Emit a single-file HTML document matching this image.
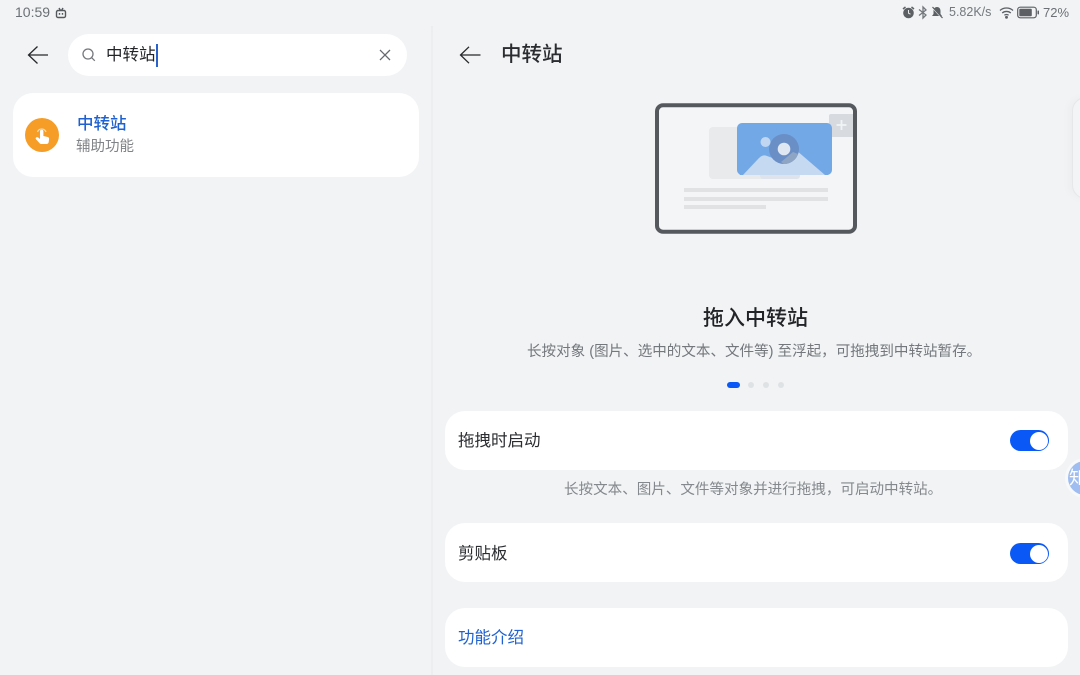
<!DOCTYPE html>
<html lang="zh-CN">
<head>
<meta charset="utf-8">
<title>中转站</title>
<style>
html,body{margin:0;padding:0}
body{width:1080px;height:675px;overflow:hidden;background:#f1f3f5;position:relative;font-family:"Liberation Sans","Noto Sans CJK SC",sans-serif;color:#26282b}
.a{position:absolute;white-space:nowrap;line-height:1}
.card{position:absolute;background:#fff;border-radius:20px}
svg{position:absolute;overflow:visible}
.sw{position:absolute;left:1010px;width:39px;height:21px;border-radius:11px;background:#0a59f7}
.sw i{position:absolute;right:1.500px;top:1.500px;width:18px;height:18px;border-radius:50%;background:#fff}
</style>
</head>
<body>
<!-- divider -->
<div style="position:absolute;left:431px;top:26px;width:2px;height:649px;background:#eceef0"></div>

<!-- status bar -->
<div class="a" style="left:15px;top:5px;font-size:14px;color:#6c7074">10:59</div>
<svg style="left:55px;top:7px" width="12" height="12" viewBox="0 0 12 12" fill="none" stroke="#55595d" stroke-width="1.400"><rect x="1.500" y="3.500" width="9" height="7" rx="1.500"/><path d="M4 1l1.500 2.500M8 1L6.500 3.500M4.500 6v1.800M7.500 6v1.800"/></svg>
<svg style="left:902px;top:6px" width="13" height="13" viewBox="0 0 13 13"><circle cx="6.500" cy="7" r="5.300" fill="#5c6064"/><path d="M1 3l2.500-2M12 3L9.500 1" stroke="#5c6064" stroke-width="1.500"/><path d="M6.500 4v3.200l2 1" stroke="#e8eaec" fill="none"/></svg>
<svg style="left:917px;top:6px" width="12" height="13" viewBox="0 0 12 13" fill="none" stroke="#74787c" stroke-width="1.300"><path d="M2 3.500l7 5.500-3 3V1l3 3-7 5.500"/></svg>
<svg style="left:931px;top:6px" width="12" height="13" viewBox="0 0 12 13"><path d="M6 1c2.500 0 3.500 2 3.500 4v3l1.500 2H1l1.500-2V5C2.500 3 3.500 1 6 1z" fill="#5c6064"/><path d="M1 1l10 11" stroke="#f1f3f5" stroke-width="1.500"/><path d="M1.500 1l10 11" stroke="#5c6064" stroke-width="1.200"/></svg>
<div class="a" style="left:949px;top:6px;font-size:12.500px;color:#74787c">5.82K/s</div>
<svg style="left:999px;top:6px" width="16" height="13" viewBox="0 0 16 13" fill="none" stroke="#5c6064" stroke-width="1.300"><path d="M1 4.500c3.500-3.300 9.500-3.300 13 0M3.200 7c2.300-2.100 6.300-2.100 8.600 0M5.400 9.300c1.200-1 3-1 4.200 0"/><circle cx="7.500" cy="11.300" r=".8" fill="#5c6064"/></svg>
<svg style="left:1017px;top:6px" width="23" height="13" viewBox="0 0 23 13"><rect x=".7" y="1.200" width="18.600" height="10.600" rx="2.500" fill="none" stroke="#5c6064" stroke-width="1.200"/><rect x="2.300" y="2.800" width="12.500" height="7.400" rx="1" fill="#5c6064"/><rect x="20.500" y="4.500" width="1.500" height="4" rx=".7" fill="#5c6064"/></svg>
<div class="a" style="left:1043px;top:6px;font-size:13px;color:#6c7074">72%</div>

<!-- left panel search -->
<svg style="left:27px;top:45px" width="22" height="20" viewBox="0 0 22 20" fill="none" stroke="#26282b" stroke-width="1.300"><path d="M21 10H1.500M10.500 1.500L1.500 10l9 8.500"/></svg>
<div style="position:absolute;left:68px;top:34px;width:339px;height:42px;border-radius:21px;background:#fff"></div>
<svg style="left:81px;top:47px" width="16" height="16" viewBox="0 0 16 16" fill="none" stroke="#74787c" stroke-width="1.300"><circle cx="7" cy="7" r="5"/><path d="M10.800 10.800l3 3"/></svg>
<div class="a" style="left:106px;top:47px;font-size:16.500px;color:#222427">中转站</div>
<div style="position:absolute;left:156px;top:44px;width:2px;height:23px;background:#2a62c9"></div>
<svg style="left:379px;top:49px" width="12" height="12" viewBox="0 0 12 12" fill="none" stroke="#666a6e" stroke-width="1.300"><path d="M1 1l10 10M11 1L1 11"/></svg>

<!-- result card -->
<div class="card" style="left:13px;top:93px;width:406px;height:84px"></div>
<div style="position:absolute;left:25px;top:118px;width:34px;height:34px;border-radius:50%;background:#f59d27"></div>
<svg style="left:25px;top:118px" width="34" height="34" viewBox="0 0 34 34"><path d="M15 13.500a1.700 1.700 0 0 1 3.400 0V18l4.300 1c1 .3 1.500 1 1.400 2l-.4 3c-.2 1.200-1 2-2.300 2h-5c-.8 0-1.500-.3-2-1l-3.400-3.700c-.5-.7-.4-1.400.2-1.900.6-.5 1.400-.4 2 .1l1.800 1.500z" fill="#fff"/><path d="M12.500 14a4.500 4.500 0 0 1 8.500 0" stroke="#fbd9a8" stroke-width="1.200" fill="none"/></svg>
<div class="a" style="left:77px;top:116px;font-size:16.500px;font-weight:500;color:#1f62cf">中转站</div>
<div class="a" style="left:76px;top:140px;font-size:14.500px;color:#808387">辅助功能</div>

<!-- right header -->
<svg style="left:459px;top:45px" width="22" height="20" viewBox="0 0 22 20" fill="none" stroke="#26282b" stroke-width="1.300"><path d="M21.500 10H1.500M10 1.800L1.500 10l8.500 8.200"/></svg>
<div class="a" style="left:501px;top:45px;font-size:20.500px;font-weight:500;color:#2a2c2f">中转站</div>

<!-- illustration -->
<svg style="left:640px;top:90px" width="230" height="155" viewBox="0 0 230 155">
  <rect x="17" y="15.300" width="198" height="126.400" rx="6" fill="#f4f5f7"/>
  <rect x="69" y="37" width="91" height="52" rx="4" fill="#e8eaec"/>
  <rect x="120" y="78" width="40" height="11" rx="3" fill="#dfe4ec"/>
  <rect x="189" y="24" width="26" height="23" rx="2" fill="#d7dade"/>
  <path d="M201.500 30v10M196.500 35h10" stroke="#f1f3f5" stroke-width="1.800"/>
  <rect x="97" y="33" width="95" height="52" rx="5" fill="#73a8e6"/>
  <path d="M103 85l16-17q4-4 8-2l17 6 12-12 29 25z" fill="#c5d9f1"/>
  <path d="M97 80v-3l5 8h-2zM192 80v-3l-6 8h2z" fill="#73a8e6"/>
  <circle cx="144" cy="59" r="15" fill="#6a8fc6"/>
  <path d="M144 74a15 15 0 0 0 14-10l-5-2-12 10z" fill="#8fa5c4"/>
  <circle cx="144" cy="59" r="6.300" fill="#dfe8f2"/>
  <circle cx="125.500" cy="52" r="5" fill="#c1d7f1"/>
  <rect x="44" y="98" width="144" height="4" fill="#e0e2e4"/>
  <rect x="44" y="107" width="144" height="4" fill="#e0e2e4"/>
  <rect x="44" y="115" width="82" height="4" fill="#e0e2e4"/>
  <rect x="17" y="15.300" width="198" height="126.400" rx="6" fill="none" stroke="#55585c" stroke-width="4"/>
</svg>

<!-- title -->
<div class="a" style="left:703px;top:308px;font-size:21px;font-weight:500;color:#222427">拖入中转站</div>
<div class="a" style="left:527px;top:345px;font-size:14.560px;color:#74777b">长按对象 (图片、选中的文本、文件等) 至浮起，可拖拽到中转站暂存。</div>

<!-- dots -->
<div style="position:absolute;left:727px;top:382px;width:13px;height:6px;border-radius:3px;background:#0a59f7"></div>
<div style="position:absolute;left:748px;top:382px;width:6px;height:6px;border-radius:50%;background:#dfe2e5"></div>
<div style="position:absolute;left:763px;top:382px;width:6px;height:6px;border-radius:50%;background:#dfe2e5"></div>
<div style="position:absolute;left:778px;top:382px;width:6px;height:6px;border-radius:50%;background:#dfe2e5"></div>

<!-- settings -->
<div class="card" style="left:445px;top:411px;width:623px;height:59px"></div>
<div class="a" style="left:458px;top:433px;font-size:16.500px;color:#2a2c2f">拖拽时启动</div>
<div class="sw" style="top:430px"><i></i></div>
<div class="a" style="left:564px;top:483px;font-size:14.560px;color:#85888c">长按文本、图片、文件等对象并进行拖拽，可启动中转站。</div>

<div class="card" style="left:445px;top:523px;width:623px;height:59px"></div>
<div class="a" style="left:458px;top:546px;font-size:16.500px;color:#2a2c2f">剪贴板</div>
<div class="sw" style="top:543px"><i></i></div>

<div class="card" style="left:445px;top:608px;width:623px;height:59px"></div>
<div class="a" style="left:458px;top:630px;font-size:16.500px;color:#1f62cf">功能介绍</div>

<!-- right edge handle -->
<div style="position:absolute;left:1072px;top:97px;width:30px;height:100px;border-radius:14px;background:#f3f4f6;border:1px solid #e5e7e9;box-shadow:-4px 0 8px rgba(0,0,0,.025)"></div>

<!-- floating bubble -->
<div style="position:absolute;left:1065px;top:458px;width:40px;height:40px;border-radius:50%;background:#f8f9fb;overflow:hidden"><div style="position:absolute;left:3px;top:3px;width:34px;height:34px;border-radius:50%;background:#9fbdf0"></div><div class="a" style="left:4px;top:11px;font-size:18px;color:#fff">知</div></div>
</body>
</html>
